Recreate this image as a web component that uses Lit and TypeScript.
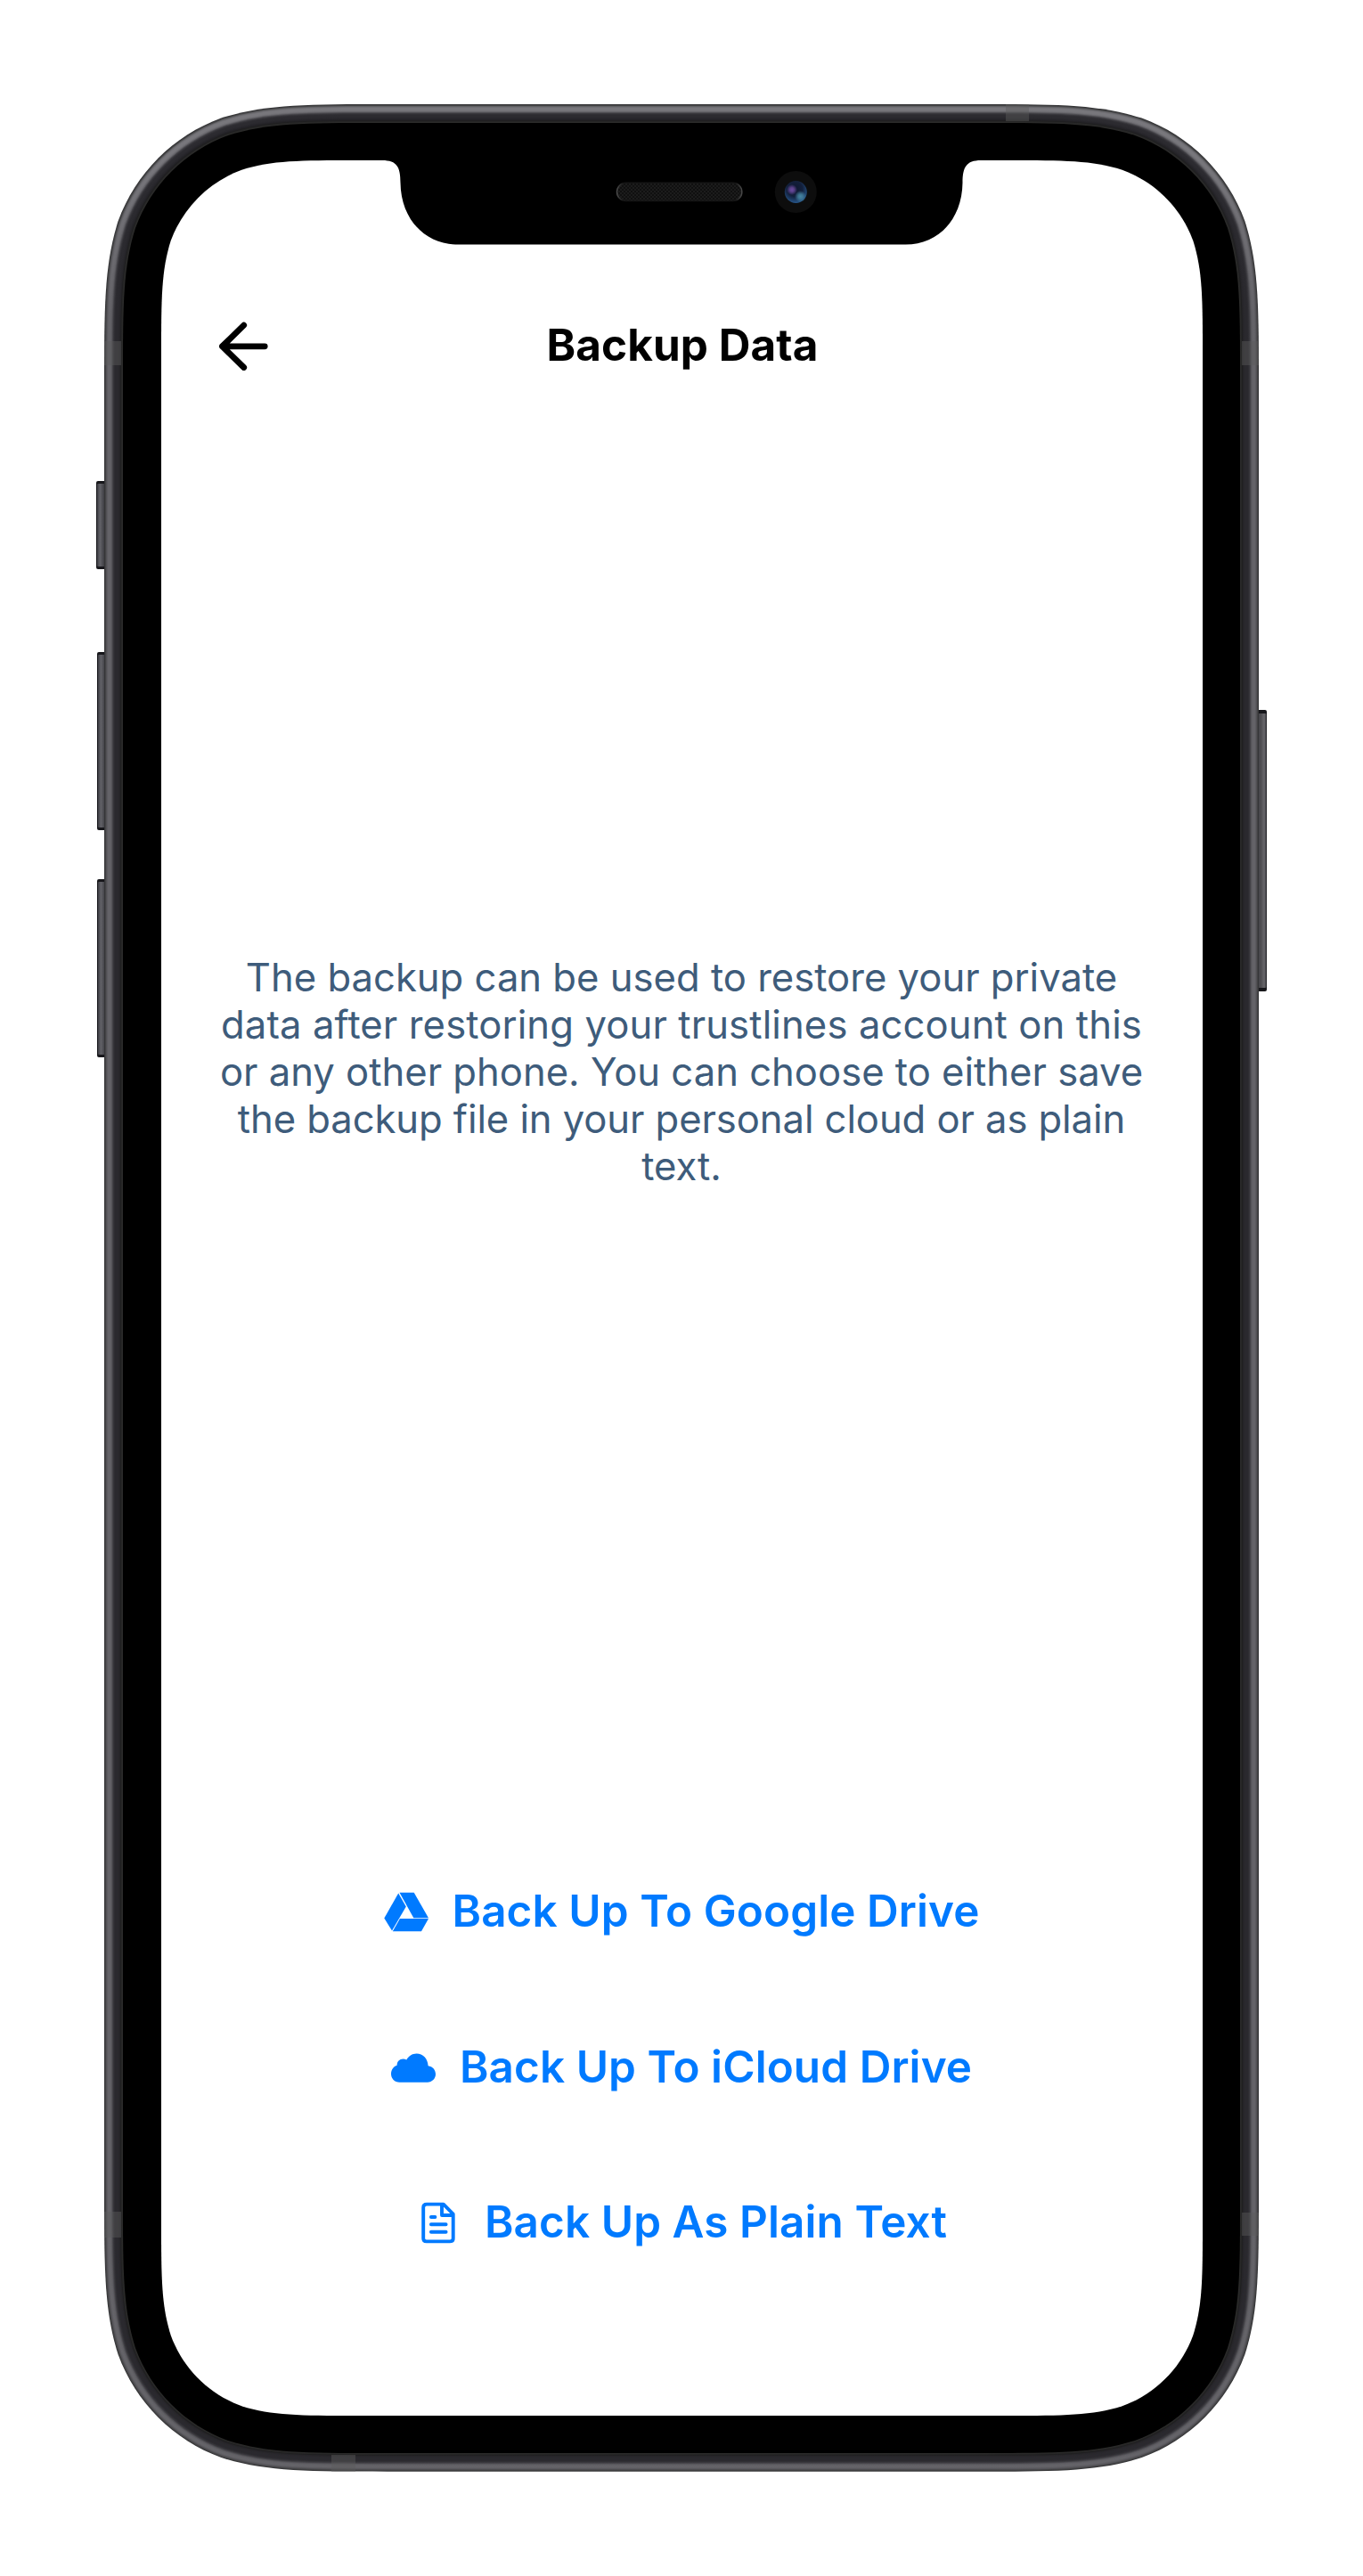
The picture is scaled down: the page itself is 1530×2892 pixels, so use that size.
import { LitElement, html, svg, css } from "lit";
import { customElement } from "lit/decorators.js";

/** Rounded rectangle with continuous corners of nominal radius r. */
function squircle(x0: number, y0: number, x1: number, y1: number, r: number): string {
  const [a, b, c, d, e, f, g] = [1.52866, 1.08849, 0.8684, 0.63149, 0.07491, 0.37282, 0.16906].map((v) => v * r);
  const corner: [number, number][] = [
    [0, a], [0, b], [0, c], [e, d], [g, f], [f, g], [d, e], [c, 0], [b, 0], [a, 0],
  ];
  const map = (fx: (p: [number, number]) => [number, number], reverse: boolean) => {
    const pts = corner.map(fx);
    if (reverse) pts.reverse();
    const [first, ...rest] = pts.map((p) => `${p[0].toFixed(2)} ${p[1].toFixed(2)}`);
    return { first, curve: `C${rest.join(" ")}` };
  };
  const parts = [
    map(([x, y]) => [x0 + x, y0 + y], false),
    map(([x, y]) => [x1 - x, y0 + y], true),
    map(([x, y]) => [x1 - x, y1 - y], false),
    map(([x, y]) => [x0 + x, y1 - y], true),
  ];
  return parts.map((p, i) => `${i ? "L" : "M"}${p.first}${p.curve}`).join("") + "Z";
}

/** Brightness of the metal band, one entry per pixel from the outer edge inwards: [top, sides]. */
const BAND: [string, string][] = [
  ["#343436", "#353537"], ["#454547", "#444446"], ["#5f5f62", "#515054"], ["#6f6e73", "#5c5b60"],
  ["#78777c", "#636267"], ["#78777c", "#656469"], ["#78777c", "#636267"], ["#737277", "#605f64"],
  ["#66656a", "#555459"], ["#4e4d52", "#434247"], ["#3a393e", "#36353a"], ["#302f34", "#2e2d32"],
  ["#2c2b30", "#2a292e"], ["#2c2b30", "#2a292e"], ["#2b2a2f", "#2a292e"], ["#29282d", "#29282d"],
  ["#26252a", "#28272b"], ["#232226", "#252428"], ["#1f1f20", "#1f1f20"], ["#262626", "#272727"],
  ["#2b2b2a", "#2b2b2a"],
];

@customElement("phone-frame")
class PhoneFrame extends LitElement {
  static styles = css`
    :host { display: block; }
    .frame { display: block; width: 1530px; height: 2892px; }
  `;

  private leftButton(x: number, y: number, h: number) {
    return svg`
      <rect x=${x} y=${y} width="14" height=${h} rx="2" fill="#17171b"/>
      <rect x=${x + 1} y=${y + 3} width="13" height=${h - 6} rx="1" fill="url(#left)"/>`;
  }

  render() {
    const rings = BAND.map((_, i) => {
      const d = squircle(117 + i, 117 + i, 1413 - i, 2774.7 - i, 208 - i);
      return svg`<path d=${d} fill=${`url(#band${i})`}/>`;
    });
    return html`
      <svg class="frame" viewBox="0 0 1530 2892" aria-hidden="true">
        <defs>
          ${BAND.map(([top, side], i) => svg`
            <linearGradient id=${`band${i}`} gradientUnits="userSpaceOnUse" x1="0" y1="117" x2="0" y2="350">
              <stop offset="0" stop-color=${top}/><stop offset="0.25" stop-color=${top}/><stop offset="1" stop-color=${side}/>
            </linearGradient>`)}
          <linearGradient id="left"><stop offset="0" stop-color="#3c3c42"/><stop offset=".25" stop-color="#626268"/><stop offset=".65" stop-color="#3b3b40"/></linearGradient>
          <linearGradient id="right"><stop offset="0" stop-color="#434347"/><stop offset=".4" stop-color="#504f53"/><stop offset=".75" stop-color="#69686c"/><stop offset="1" stop-color="#3c3c41"/></linearGradient>
          <pattern id="mesh" width="4" height="4" patternUnits="userSpaceOnUse">
            <rect width="4" height="4" fill="#101010"/><rect width="2" height="2" fill="#1c1c1c"/><rect x="2" y="2" width="2" height="2" fill="#1c1c1c"/>
          </pattern>
          <linearGradient id="rim"><stop offset="0" stop-color="#4a4a4a"/><stop offset=".05" stop-color="#151515"/><stop offset=".95" stop-color="#151515"/><stop offset="1" stop-color="#4a4a4a"/></linearGradient>
          <radialGradient id="lens" cx=".45" cy=".35" r=".7"><stop offset="0" stop-color="#0e1730"/><stop offset=".5" stop-color="#13203c"/><stop offset="1" stop-color="#2a5f97"/></radialGradient>
          <radialGradient id="violet"><stop offset="0" stop-color="#6b4a9e"/><stop offset=".4" stop-color="#6b4a9e" stop-opacity=".8"/><stop offset="1" stop-color="#6b4a9e" stop-opacity="0"/></radialGradient>
          <radialGradient id="teal"><stop offset="0" stop-color="#44839f"/><stop offset=".4" stop-color="#44839f" stop-opacity=".8"/><stop offset="1" stop-color="#44839f" stop-opacity="0"/></radialGradient>
        </defs>
        ${this.leftButton(108, 540, 99)}
        ${this.leftButton(109, 732, 200)}
        ${this.leftButton(109, 987, 200)}
        <rect x="1408" y="797" width="14" height="316" rx="2" fill="#17171b"/>
        <rect x="1412" y="801" width="9.500" height="308" rx="1" fill="url(#right)"/>
        ${rings}
        <g fill="#5a5a5a" fill-opacity=".45">
          <rect x="117" y="383" width="19" height="27"/><rect x="1394" y="383" width="19" height="27"/>
          <rect x="117" y="2483" width="19" height="29"/><rect x="1394" y="2484" width="19" height="26"/>
          <rect x="1129" y="117" width="26" height="19"/><rect x="372" y="2756" width="27" height="18.700"/>
        </g>
        <path fill="#000" d=${squircle(138, 138, 1392, 2754, 187)}/>
        <path fill="#fff" d=${squircle(181, 180, 1350, 2712, 143)}/>
        <path fill="#000" d="M429 179V180C446 180 449.500 188 449.500 205C450 247 478 274.600 514 274.600H1016.500C1052.500 274.600 1080 247 1080.500 205C1080.500 188 1084.500 180 1101 180V179Z"/>
        <rect x="692.500" y="205.200" width="140.300" height="20.300" rx="10.100" fill="url(#mesh)" stroke="url(#rim)" stroke-width="1.500"/>
        <circle cx="893.300" cy="215.500" r="23.500" fill="#0d0d0d"/>
        <circle cx="893.300" cy="215.500" r="12.500" fill="url(#lens)"/>
        <circle cx="889" cy="213" r="6" fill="url(#violet)"/>
        <circle cx="898.500" cy="220.500" r="6.500" fill="url(#teal)"/>
      </svg>`;
  }
}

@customElement("backup-option")
class BackupOption extends LitElement {
  static properties = { icon: {}, label: {} };
  declare icon: string;
  declare label: string;
  static styles = css`
    :host { display: flex; justify-content: center; }
    .option {
      display: flex; align-items: center; gap: 25px; height: 72px; padding: 0 2px 0 0; border: 0;
      background: none; color: #007aff; font: 600 49.4px/72px Inter, sans-serif; white-space: nowrap;
    }
    .icon { display: block; width: 54px; height: 64px; }
    .label { letter-spacing: 0.1px; }
  `;
  private glyph() {
    if (this.icon === "drive") {
      return svg`<g fill="currentColor"><path d="M18.200 12.600L26.800 27.600L11 54.500L2.300 40.500Z"/><path d="M19.500 11.700H35.700L52 40.300H35.300Z"/><path d="M19.900 41.100H52L44 55.200H11.800Z"/></g>`;
    }
    if (this.icon === "cloud") {
      return svg`<path fill="currentColor" d="M11.500 49.700C6 49.700 2 45.500 2 40.200C2 35.500 4.800 32 8.600 30.700C8.600 26.300 11.500 23.400 15.500 23.400C17 23.400 18.200 23.700 19.300 24.400C21.500 20.200 25.800 17.400 30.600 17.400C37.800 17.400 43.200 23 43.600 31.200C48.500 31.800 52 35.800 52 40.600C52 45.800 48 49.700 42.800 49.700Z"/>`;
    }
    return svg`<g fill="none" stroke="currentColor" stroke-width="3.900" stroke-linejoin="round" stroke-linecap="round"><path d="M14 12.600H32.800L43.700 23.700V51Q43.700 54.400 40.200 54.400H13.700Q10.200 54.400 10.200 51V16.200Q10.200 12.600 14 12.600ZM31 12.600V25H43.700"/><path d="M18.900 27H23.400M18.900 35.300H35.600M18.900 43.700H35.600"/></g>`;
  }
  render() {
    return html`<button class="option"><svg class="icon" viewBox="0 0 54 64" aria-hidden="true">${this.glyph()}</svg><span class="label">${this.label}</span></button>`;
  }
}

@customElement("app-root")
class AppRoot extends LitElement {
  static styles = css`
    :host { display: block; }
    .stage { display: grid; width: 1530px; height: 2892px; background: #fff; overflow: hidden; }
    .device, .screen { grid-area: 1 / 1; }
    .screen {
      z-index: 1; box-sizing: border-box; display: flex; flex-direction: column;
      padding: 340px 240px 361.6px; font-family: Inter, sans-serif;
    }
    .header { display: grid; grid-template-columns: 66px 1fr 64px; align-items: center; height: 93px; }
    .back { display: block; width: 66px; height: 66px; }
    .title { margin: 0; text-align: center; color: #000; font-size: 49.4px; line-height: 72px; font-weight: 700; letter-spacing: 0.1px; }
    .message {
      flex: 1; margin: 0; padding-top: 638px; text-align: center; color: #3e5c7b;
      font-size: 43.6px; line-height: 53px; white-space: nowrap;
    }
    .loose { letter-spacing: 0.12px; }
    .tight { letter-spacing: -0.08px; }
    .actions { display: flex; flex-direction: column; gap: 102.6px; }
  `;
  render() {
    return html`
      <main class="stage">
        <phone-frame class="device"></phone-frame>
        <section class="screen">
          <header class="header">
            <svg class="back" viewBox="0 0 66 66" aria-label="Back"><path d="M57.200 34.800H9.500M33.700 11.100L9.500 34.800L33.700 58.500" fill="none" stroke="#000" stroke-width="6.800" stroke-linecap="round" stroke-linejoin="round"/></svg>
            <h1 class="title">Backup Data</h1>
          </header>
          <p class="message">The backup can be used to restore your private<br><span class="loose">data after restoring your trustlines account on this</span><br>or any other phone. You can choose to either save<br><span class="tight">the backup file in your personal cloud or as plain</span><br>text.</p>
          <div class="actions">
            <backup-option icon="drive" label="Back Up To Google Drive"></backup-option>
            <backup-option icon="cloud" label="Back Up To iCloud Drive"></backup-option>
            <backup-option icon="file" label="Back Up As Plain Text"></backup-option>
          </div>
        </section>
      </main>`;
  }
}
